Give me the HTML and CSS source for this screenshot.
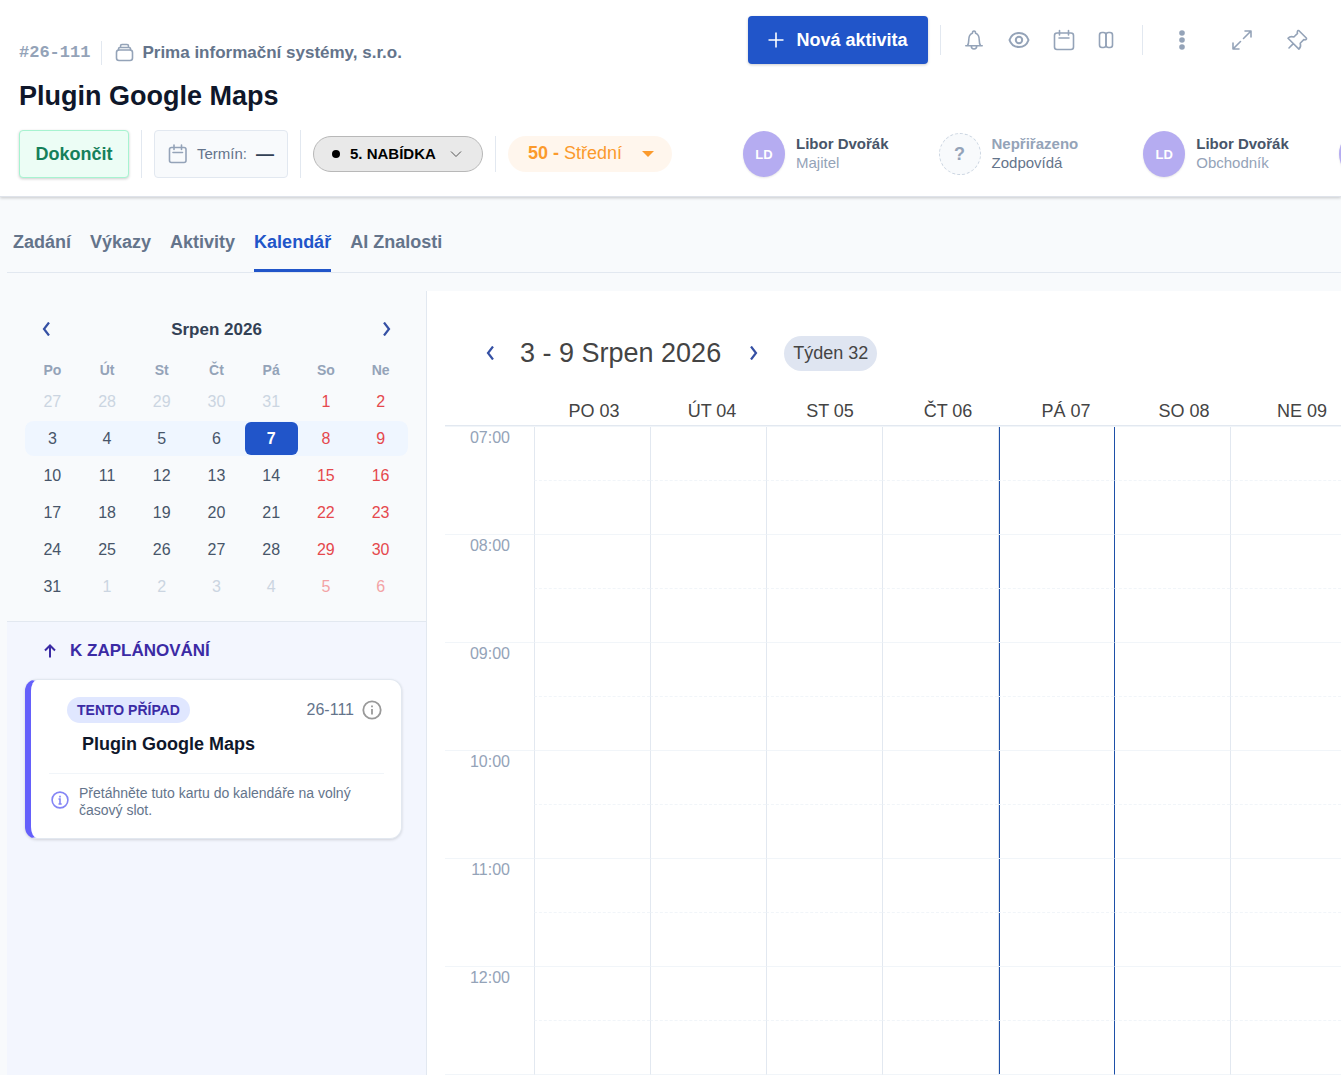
FILE: index.html
```
<!DOCTYPE html>
<html lang="cs">
<head>
<meta charset="utf-8">
<meta name="viewport" content="width=device-width, initial-scale=1">
<title>Plugin Google Maps</title>
<link rel="stylesheet" href="styles.css">
</head>
<body>
<header class="case">
  <div class="case-top">
    <div class="case-name">
      <div class="crumbs">
        <span class="case-id">#26-111</span>
        <a class="company" href="#company">
          <svg class="ico" width="20" height="20" viewBox="0 0 20 20"><rect x="1.500" y="7" width="16" height="10.500" rx="2.500"/><path d="M3.500 7V6A1.500 1.500 0 0 1 5 4.500h9A1.500 1.500 0 0 1 15.500 6v1M5.500 4.500V3A1.500 1.500 0 0 1 7 1.500h5A1.500 1.500 0 0 1 13.500 3v1.500"/></svg>
          Prima informační systémy, s.r.o.
        </a>
      </div>
      <h1>Plugin Google Maps</h1>
    </div>
    <div class="actions">
      <button class="new" type="button"><svg width="16" height="16" viewBox="0 0 16 16"><path d="M8 0.500v15M0.500 8h15"/></svg>Nová aktivita</button>
      <span class="rule"></span>
      <div class="tools">
        <button class="tool" type="button" aria-label="Upozornění"><svg class="ico" width="22" height="22" viewBox="0 0 22 22"><path d="M2.800 16.800h16.400M4.500 16.500c1-1.300 1.200-2.600 1.200-5 0-4 1.400-6.500 3.700-7.200C9.400 2.800 10 2 11 2s1.600.8 1.600 2.300c2.300.7 3.700 3.200 3.700 7.200 0 2.400.2 3.700 1.200 5M8.300 17c0 2 1.100 3 2.700 3s2.700-1 2.700-3"/></svg></button>
        <button class="tool" type="button" aria-label="Sledovat"><svg class="ico bold" width="22" height="22" viewBox="0 0 22 22"><path d="M1.500 11C3 6.500 6.500 4 11 4s8 2.500 9.500 7c-1.500 4.500-5 7-9.500 7s-8-2.500-9.500-7z"/><circle cx="11" cy="11" r="3.200"/></svg></button>
        <button class="tool" type="button" aria-label="Kalendář"><svg class="ico" width="22" height="22" viewBox="0 0 22 22"><rect x="1.500" y="4" width="19" height="16.500" rx="2.500"/><path d="M6.500 1.500v4.500M15.500 1.500v4.500M6 9h10"/></svg></button>
        <button class="tool slim" type="button" aria-label="Sloupce"><svg class="ico" width="16" height="18" viewBox="0 0 16 18"><rect x="1.500" y="1.500" width="6.500" height="15" rx="2.500"/><rect x="8" y="1.500" width="6.500" height="15" rx="2.500"/></svg></button>
      </div>
      <span class="rule far"></span>
      <button class="tool" type="button" aria-label="Další"><svg class="dots" width="8" height="22" viewBox="0 0 8 22"><circle cx="4" cy="4" r="2.800"/><circle cx="4" cy="11" r="2.800"/><circle cx="4" cy="18" r="2.800"/></svg></button>
      <button class="tool expand" type="button" aria-label="Zvětšit"><svg class="ico" width="22" height="22" viewBox="0 0 22 22"><path d="M14 2h6v6M20 2l-7.500 7.500M2 14v6h6M2 20l7.500-7.500"/></svg></button>
      <button class="tool pin" type="button" aria-label="Připnout"><svg class="ico" width="22" height="22" viewBox="0 0 22 22"><path d="M13 1.700l7.300 7.300c.8 1.200-.8 2.300-2.500 1.600l-3.600 3.600c.9 2.600.3 4.400-1.300 5.900L2 9.200C3.500 7.600 5.500 7.200 7.900 8l3.600-3.600C10.700 2.600 11.900.900 13 1.700zM7.300 14.600L3 19"/></svg></button>
    </div>
  </div>
  <div class="controls">
    <button class="finish" type="button">Dokončit</button>
    <span class="rule"></span>
    <button class="due" type="button"><svg class="ico" width="20" height="20" viewBox="0 0 20 20"><rect x="1.500" y="3.500" width="16.500" height="15" rx="2"/><path d="M6 1v4.500M13.500 1v4.500M5 8.500h9.500"/></svg><span>Termín:</span><b>—</b></button>
    <span class="rule"></span>
    <button class="stage" type="button" aria-haspopup="listbox"><i class="dot"></i>5. NABÍDKA<svg width="12" height="8" viewBox="0 0 12 8"><path d="M1 1.500l5 5 5-5"/></svg></button>
    <span class="rule short"></span>
    <button class="priority" type="button" aria-haspopup="listbox"><span><b>50 -</b> Střední</span><svg width="12" height="6" viewBox="0 0 12 6"><path d="M0 0h12L6 6z"/></svg></button>
    <ul class="people">
      <li><span class="avatar">LD</span><span class="who"><b>Libor Dvořák</b><span>Majitel</span></span></li>
      <li class="nobody"><span class="avatar">?</span><span class="who"><b>Nepřiřazeno</b><span>Zodpovídá</span></span></li>
      <li><span class="avatar">LD</span><span class="who"><b>Libor Dvořák</b><span>Obchodník</span></span></li>
      <li><span class="avatar"></span></li>
    </ul>
  </div>
</header>

<main class="content">
  <nav class="tabs">
    <a href="#zadani">Zadání</a>
    <a href="#vykazy">Výkazy</a>
    <a href="#aktivity">Aktivity</a>
    <a class="current" href="#kalendar" aria-current="page">Kalendář</a>
    <a href="#znalosti">AI Znalosti</a>
  </nav>
  <div class="planner">
    <aside class="side">
      <section class="month">
        <div class="month-bar">
          <button class="step" type="button" aria-label="Předchozí měsíc"><svg width="10" height="14" viewBox="0 0 10 14"><path d="M8 0.500L3 7l5 6.500"/></svg></button>
          <h2>Srpen 2026</h2>
          <button class="step" type="button" aria-label="Další měsíc"><svg width="10" height="14" viewBox="0 0 10 14"><path d="M2 0.500L7 7l-5 6.500"/></svg></button>
        </div>
        <table class="days">
          <thead><tr><th>Po</th><th>Út</th><th>St</th><th>Čt</th><th>Pá</th><th>So</th><th>Ne</th></tr></thead>
          <tbody>
            <tr><td class="out">27</td><td class="out">28</td><td class="out">29</td><td class="out">30</td><td class="out">31</td><td>1</td><td>2</td></tr>
            <tr class="this-week"><td>3</td><td>4</td><td>5</td><td>6</td><td><span class="today">7</span></td><td>8</td><td>9</td></tr>
            <tr><td>10</td><td>11</td><td>12</td><td>13</td><td>14</td><td>15</td><td>16</td></tr>
            <tr><td>17</td><td>18</td><td>19</td><td>20</td><td>21</td><td>22</td><td>23</td></tr>
            <tr><td>24</td><td>25</td><td>26</td><td>27</td><td>28</td><td>29</td><td>30</td></tr>
            <tr><td>31</td><td class="out">1</td><td class="out">2</td><td class="out">3</td><td class="out">4</td><td class="out">5</td><td class="out">6</td></tr>
          </tbody>
        </table>
      </section>
      <section class="backlog">
        <h2><svg width="14" height="14" viewBox="0 0 14 14"><path d="M7 13.500V1.500M2 6.500l5-5 5 5"/></svg>K ZAPLÁNOVÁNÍ</h2>
        <article class="card">
          <div class="card-top">
            <span class="tag">TENTO PŘÍPAD</span>
            <span class="number">26-111</span>
            <svg class="info" width="20" height="20" viewBox="0 0 20 20"><circle cx="10" cy="10" r="8.700"/><path d="M10 9v5.500M10 5.500v1.800"/></svg>
          </div>
          <h3>Plugin Google Maps</h3>
          <div class="hint">
            <svg class="info" width="18" height="18" viewBox="0 0 18 18"><circle cx="9" cy="9" r="7.900"/><path d="M7.500 8H9v5M7.500 13h3.200M9 4.800v1.600"/></svg>
            <p>Přetáhněte tuto kartu do kalendáře na volný časový slot.</p>
          </div>
        </article>
      </section>
    </aside>
    <section class="week">
      <div class="week-bar">
        <button class="step" type="button" aria-label="Předchozí týden"><svg width="10" height="14" viewBox="0 0 10 14"><path d="M8 0.500L3 7l5 6.500"/></svg></button>
        <h2>3 - 9 Srpen 2026</h2>
        <button class="step" type="button" aria-label="Další týden"><svg width="10" height="14" viewBox="0 0 10 14"><path d="M2 0.500L7 7l-5 6.500"/></svg></button>
        <span class="week-no">Týden 32</span>
      </div>
      <div class="day-names"><span></span><span>PO 03</span><span>ÚT 04</span><span>ST 05</span><span>ČT 06</span><span>PÁ 07</span><span>SO 08</span><span>NE 09</span></div>
      <div class="slots-wrap">
      <table class="slots">
        <colgroup><col class="time-col"><col span="7"></colgroup>
        <tbody>
          <tr class="half"><th rowspan="2">07:00</th><td></td><td></td><td></td><td></td><td></td><td></td><td></td></tr>
          <tr><td></td><td></td><td></td><td></td><td></td><td></td><td></td></tr>
          <tr class="half"><th rowspan="2">08:00</th><td></td><td></td><td></td><td></td><td></td><td></td><td></td></tr>
          <tr><td></td><td></td><td></td><td></td><td></td><td></td><td></td></tr>
          <tr class="half"><th rowspan="2">09:00</th><td></td><td></td><td></td><td></td><td></td><td></td><td></td></tr>
          <tr><td></td><td></td><td></td><td></td><td></td><td></td><td></td></tr>
          <tr class="half"><th rowspan="2">10:00</th><td></td><td></td><td></td><td></td><td></td><td></td><td></td></tr>
          <tr><td></td><td></td><td></td><td></td><td></td><td></td><td></td></tr>
          <tr class="half"><th rowspan="2">11:00</th><td></td><td></td><td></td><td></td><td></td><td></td><td></td></tr>
          <tr><td></td><td></td><td></td><td></td><td></td><td></td><td></td></tr>
          <tr class="half"><th rowspan="2">12:00</th><td></td><td></td><td></td><td></td><td></td><td></td><td></td></tr>
          <tr><td></td><td></td><td></td><td></td><td></td><td></td><td></td></tr>
        </tbody>
      </table>
      </div>
    </section>
  </div>
</main>
</body>
</html>
```
FILE: styles.css
```
* { box-sizing: border-box; }
body {
  margin: 0;
  min-height: 100vh;
  display: flex;
  flex-direction: column;
  background: #f8fafc;
  color: #0f172a;
  font-family: "Liberation Sans", Arial, sans-serif;
  font-size: 18px;
  line-height: 24px;
}
h1, h2, h3, p, ul { margin: 0; padding: 0; }
ul { list-style: none; }
a { color: inherit; text-decoration: none; }
button {
  margin: 0;
  padding: 0;
  border: 0;
  background: none;
  font: inherit;
  color: inherit;
  cursor: pointer;
}
svg { display: block; flex: none; fill: none; stroke: currentColor; }
.ico { stroke: #94a3b8; stroke-width: 1.6; stroke-linecap: round; stroke-linejoin: round; }
.ico.bold { stroke-width: 2; }
.rule { flex: none; width: 1px; height: 48px; background: #e2e8f0; }

/* Case header */
.case {
  padding: 16px 0 18px 19px;
  border-bottom: 1px solid #dfe3ea;
  background: #fff;
  box-shadow: 0 1px 3px rgba(0, 0, 0, .2);
  overflow-x: clip;
  position: relative;
}
.case-top { display: flex; justify-content: space-between; padding-right: 22px; }
.crumbs { display: flex; align-items: center; height: 24px; margin-top: 25px; }
.case-id {
  padding-right: 11px;
  border-right: 1px solid #e2e8f0;
  color: #94a3b8;
  font: bold 17px/24px "Liberation Mono", monospace;
}
.company {
  display: flex;
  align-items: center;
  gap: 7px;
  margin-left: 13px;
  color: #64748b;
  font-size: 17px;
  font-weight: bold;
}
h1 { margin-top: 13px; font-size: 27px; line-height: 36px; }
.actions { display: flex; align-items: center; height: 48px; }
.actions .rule { height: 30px; margin: 0 10px 0 12px; }
.actions .rule.far { margin: 0 16px 0 17px; }
.new {
  display: flex;
  align-items: center;
  justify-content: center;
  gap: 12px;
  width: 180px;
  height: 48px;
  border-radius: 4px;
  background: #2155c9;
  color: #fff;
  font-weight: bold;
  box-shadow: 0 1px 3px rgba(0, 0, 0, .2);
}
.new svg { stroke-width: 1.6; }
.tools { display: flex; }
.tool { display: flex; align-items: center; justify-content: center; width: 45px; height: 45px; }
.tool.slim { width: 39px; }
.tool.expand { margin-left: 15px; }
.tool.pin { margin-left: 10px; }
.dots { fill: #94a3b8; stroke: none; }

.controls { display: flex; align-items: center; gap: 12px; margin-top: 16px; white-space: nowrap; }
.controls > * { flex: none; }
.rule.short { height: 36px; }
.finish {
  width: 110px;
  height: 48px;
  border: 1px solid #a7f3d0;
  border-radius: 4px;
  background: #ecfdf5;
  color: #15805a;
  font-weight: bold;
  box-shadow: 0 1px 3px rgba(0, 0, 0, .2);
}
.due {
  display: flex;
  align-items: center;
  width: 134px;
  height: 48px;
  padding-left: 13px;
  border: 1px solid #e2e8f0;
  border-radius: 4px;
  background: #f8fafc;
  color: #64748b;
  font-size: 15px;
}
.due span { margin: 0 9px; }
.due b { color: #334155; font-size: 18px; }
.stage {
  display: flex;
  align-items: center;
  width: 170px;
  height: 36px;
  padding-left: 18px;
  border: 1px solid #b8b8b8;
  border-radius: 18px;
  background: #e9e9e9;
  color: #000;
  font-size: 15px;
  font-weight: bold;
}
.stage svg { margin-left: 14px; stroke: #555; }
.dot { width: 8px; height: 8px; margin-right: 10px; border-radius: 50%; background: #000; }
.priority {
  display: flex;
  align-items: center;
  gap: 20px;
  width: 164px;
  height: 36px;
  padding: 0 0 2px 20px;
  border-radius: 18px;
  background: #fff6ed;
  color: #fb9a2c;
}
.priority svg { margin-top: 2px; fill: #fb9a2c; stroke: none; }
.people { display: flex; gap: 50px; margin-left: 59px; font-size: 15px; line-height: 19px; }
.people li { display: flex; align-items: center; gap: 11px; color: #94a3b8; }
.who { display: flex; flex-direction: column; padding-bottom: 2px; }
.who b { color: #475569; }
.avatar {
  display: flex;
  align-items: center;
  justify-content: center;
  width: 42px;
  height: 46px;
  border-radius: 50%;
  background: #b5acf1;
  color: #fff;
  font-size: 13px;
  font-weight: bold;
  box-shadow: 0 1px 2px rgba(0, 0, 0, .1);
}
.people .nobody { padding-right: 15px; color: #64748b; }
.nobody b { color: #94a3b8; }
.nobody .avatar {
  height: 42px;
  border: 1px dashed #cbd5e1;
  background: #f8fafc;
  color: #94a3b8;
  font-size: 18px;
  box-shadow: none;
}

/* Tabs */
.content { display: flex; flex-direction: column; flex: 1; padding: 18px 0 0 7px; }
.tabs {
  display: flex;
  gap: 19px;
  height: 58px;
  padding-left: 6px;
  border-bottom: 1px solid #e2e8f0;
  color: #64748b;
  font-weight: bold;
}
.tabs a { padding-top: 15px; }
.tabs .current { border-bottom: 3px solid #2155c9; color: #2155c9; }

/* Month overview */
.planner { display: flex; flex: 1; margin-top: 18px; }
.side {
  display: flex;
  flex-direction: column;
  flex: none;
  width: 420px;
  border-right: 1px solid #e2e8f0;
}
.month { padding: 22px 18px 16px; border-bottom: 1px solid #e2e8f0; }
.month-bar { display: flex; align-items: center; justify-content: space-between; height: 32px; padding: 0 4px; }
.month-bar h2 { padding-top: 2px; color: #334155; font-size: 17px; }
.step { display: flex; align-items: center; justify-content: center; width: 34px; height: 32px; color: #3550a4; }
.step svg { stroke-width: 2.2; }
.days {
  width: 383px;
  margin-top: 10px;
  border-spacing: 0;
  table-layout: fixed;
  color: #475569;
  font-size: 16px;
  text-align: center;
}
.days th { height: 28px; padding: 2px 0 0; color: #94a3b8; font-size: 14px; line-height: 26px; }
.days td { height: 37px; padding: 0; }
.days td:nth-child(n+6) { color: #e5484d; }
.days .out { color: #cbd5e1; }
.days .out:nth-child(n+6) { color: #f3a3a5; }
.this-week td { background: #eff6ff; background-clip: padding-box; border: 0 solid transparent; border-width: 1px 0; }
.this-week td:first-child { border-radius: 9px 0 0 9px; }
.this-week td:last-child { border-radius: 0 9px 9px 0; }
.today {
  display: block;
  margin: 0 1px;
  border-radius: 6px;
  background: #2155c9;
  color: #fff;
  font-weight: bold;
  line-height: 33px;
}

/* Unscheduled cases */
.backlog { flex: 1; padding: 17px 24px 18px 18px; background: #f3f6fe; }
.backlog h2 { display: flex; align-items: center; gap: 13px; padding-left: 18px; color: #3b2ba5; font-size: 17px; }
.backlog h2 svg { stroke-width: 2; }
.card {
  margin-top: 16px;
  padding: 17px 17px 19px 18px;
  border: 1px solid #e2e8f0;
  border-left: 6px solid #6560fb;
  border-radius: 12px;
  background: #fff;
  box-shadow: 0 1px 3px rgba(0, 0, 0, .15);
}
.card-top { display: flex; align-items: center; padding-left: 18px; }
.tag {
  padding: 0 10px;
  border-radius: 13px;
  background: #e0e7ff;
  color: #3b2ba5;
  font-size: 14px;
  font-weight: bold;
  line-height: 26px;
}
.number { margin: 0 8px 0 auto; color: #64748b; font-size: 16px; line-height: 22px; }
.info { margin-right: 2px; stroke: #999; stroke-width: 1.8; }
.card h3 { margin-top: 9px; padding-left: 33px; font-size: 18px; }
.hint {
  display: flex;
  gap: 8px;
  margin-top: 17px;
  padding: 11px 0 0 2px;
  border-top: 1px solid #f1f5f9;
  color: #64748b;
  font-size: 14px;
  line-height: 17px;
}
.hint .info { margin-top: 6px; stroke: #8485f5; stroke-width: 1.6; }

/* Week grid */
.week { flex: 1; min-width: 0; padding: 44px 0 0 18px; background: #fff; color: #444; overflow: hidden; }
.week-bar { display: flex; align-items: center; height: 36px; padding-left: 28px; }
.week-bar h2 { margin: 0 16px 0 13px; font-size: 27px; font-weight: normal; }
.week-no { margin-left: 13px; padding: 0 9px; border-radius: 18px; background: #dfe5f1; line-height: 35px; }
.day-names {
  display: grid;
  grid-template-columns: 90px repeat(7, minmax(0, 1fr));
  margin: 27px -20px 0 0;
  border-bottom: 1px solid #e2e8f0;
  line-height: 27px;
  text-align: center;
}
.slots-wrap { margin-right: -5px; padding-top: 1px; background: #f1f5f9; }
.slots { width: 100%; border-spacing: 0; table-layout: fixed; background: #fff; }
.time-col { width: 89px; }
.slots th {
  padding: 0 24px 0 0;
  border-bottom: 1px solid #f1f5f9;
  color: #94a3b8;
  font-size: 16px;
  font-weight: normal;
  line-height: 22px;
  text-align: right;
  vertical-align: top;
}
.slots td { height: 54px; padding: 0; border-left: 1px solid #e2e8f0; border-bottom: 1px solid #f1f5f9; }
.slots .half td { border-bottom-style: dashed; }
.slots td:nth-last-child(3) { box-shadow: inset 1px 0 #1e50a8; }
.slots td:nth-last-child(2) { border-left-color: #1e50a8; }
```
